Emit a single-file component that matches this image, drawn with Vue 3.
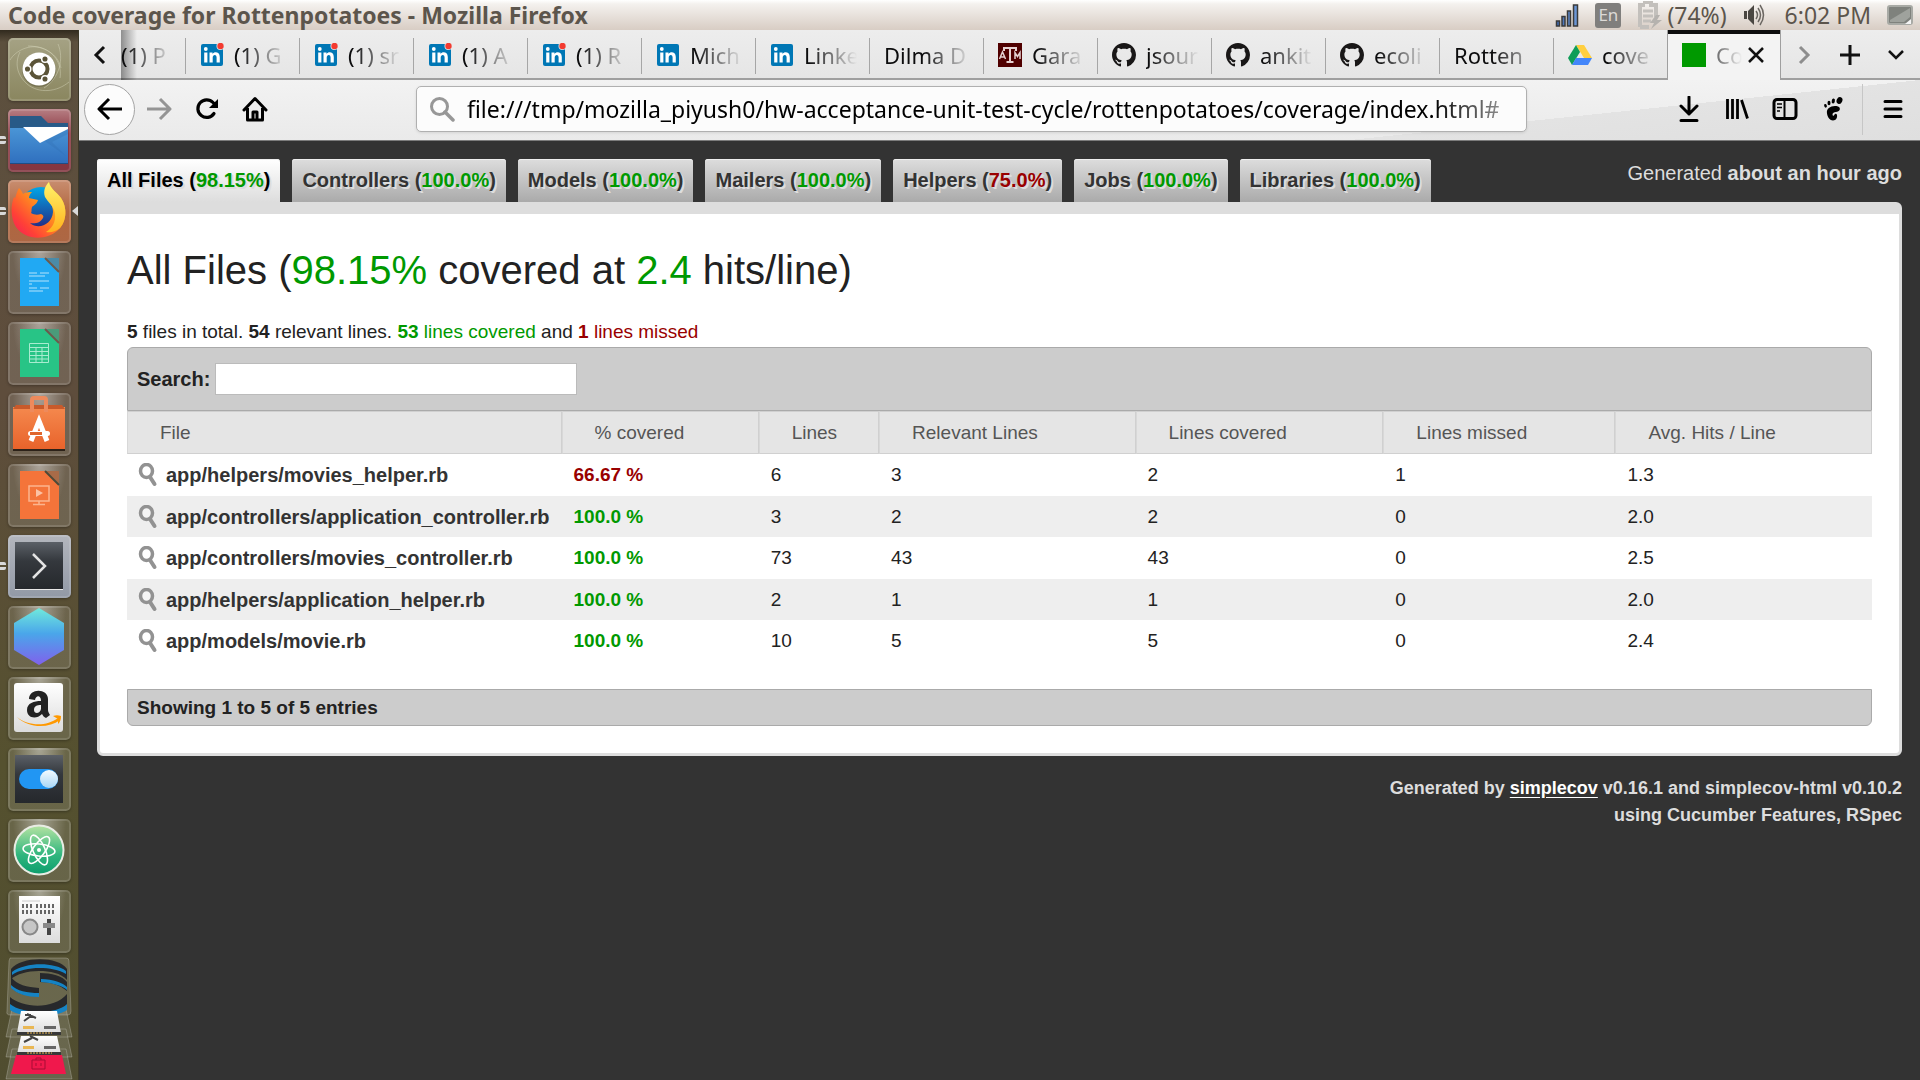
<script setup>
import { ref } from 'vue'

const query = ref('')
const address = ref('file:///tmp/mozilla_piyush0/hw-acceptance-unit-test-cycle/rottenpotatoes/coverage/index.html#')

const launcher = [
  { id: 'dash', name: 'Search your computer', tone: 'olive' },
  { id: 'files', name: 'Files', tone: 'wine', running: true },
  { id: 'firefox', name: 'Firefox', tone: 'rust', running: true, focused: true },
  { id: 'writer', name: 'Writer' },
  { id: 'calc', name: 'Calc' },
  { id: 'software', name: 'Software' },
  { id: 'impress', name: 'Impress' },
  { id: 'terminal', name: 'Terminal', tone: 'steel', running: true },
  { id: 'hexagon', name: 'Kitematic' },
  { id: 'amazon', name: 'Amazon' },
  { id: 'tweaks', name: 'Tweak Tool' },
  { id: 'atom', name: 'Atom' },
  { id: 'mixer', name: 'Mixer' }
]

const browserTabs = [
  { title: '(1) P', icon: '', first: true },
  { title: '(1) G', icon: 'linkedin-dot' },
  { title: '(1) sr', icon: 'linkedin-dot' },
  { title: '(1) A', icon: 'linkedin-dot' },
  { title: '(1) R', icon: 'linkedin-dot' },
  { title: 'Mich', icon: 'linkedin' },
  { title: 'Linke', icon: 'linkedin' },
  { title: 'Dilma D', icon: '' },
  { title: 'Gara', icon: 'tamu' },
  { title: 'jsour', icon: 'github' },
  { title: 'ankit', icon: 'github' },
  { title: 'ecoli', icon: 'github' },
  { title: 'Rotten', icon: '' },
  { title: 'cove', icon: 'drive' }
]

const groups = [
  { name: 'All Files', pct: '98.15%', level: 'green', active: true },
  { name: 'Controllers', pct: '100.0%', level: 'green' },
  { name: 'Models', pct: '100.0%', level: 'green' },
  { name: 'Mailers', pct: '100.0%', level: 'green' },
  { name: 'Helpers', pct: '75.0%', level: 'red' },
  { name: 'Jobs', pct: '100.0%', level: 'green' },
  { name: 'Libraries', pct: '100.0%', level: 'green' }
]

const columns = ['File', '% covered', 'Lines', 'Relevant Lines', 'Lines covered', 'Lines missed', 'Avg. Hits / Line']

const files = [
  { path: 'app/helpers/movies_helper.rb', pct: '66.67 %', level: 'red', nums: ['6', '3', '2', '1', '1.3'] },
  { path: 'app/controllers/application_controller.rb', pct: '100.0 %', level: 'green', nums: ['3', '2', '2', '0', '2.0'] },
  { path: 'app/controllers/movies_controller.rb', pct: '100.0 %', level: 'green', nums: ['73', '43', '43', '0', '2.5'] },
  { path: 'app/helpers/application_helper.rb', pct: '100.0 %', level: 'green', nums: ['2', '1', '1', '0', '2.0'] },
  { path: 'app/models/movie.rb', pct: '100.0 %', level: 'green', nums: ['10', '5', '5', '0', '2.4'] }
]
</script>

<template>
  <div class="desktop">
    <svg class="sprite" aria-hidden="true">
      <defs>
        <linearGradient id="g-folder" x1="0" y1="0" x2="0" y2="1"><stop offset="0" stop-color="#4a95d6" /><stop offset="1" stop-color="#2f6fbe" /></linearGradient>
        <linearGradient id="g-fox" x1="1" y1="0" x2="0" y2="1"><stop offset="0" stop-color="#ffd83a" /><stop offset=".4" stop-color="#ff9a1c" /><stop offset=".75" stop-color="#ff4236" /><stop offset="1" stop-color="#f4165e" /></linearGradient>
        <linearGradient id="g-tail" x1="0" y1="0" x2="0" y2="1"><stop offset="0" stop-color="#fff36a" /><stop offset="1" stop-color="#ffb21d" /></linearGradient>
        <linearGradient id="g-globe" x1="0" y1="0" x2="0" y2="1"><stop offset="0" stop-color="#00a6e8" /><stop offset="1" stop-color="#28207c" /></linearGradient>
        <linearGradient id="g-bag" x1="0" y1="0" x2="0" y2="1"><stop offset="0" stop-color="#f5894e" /><stop offset="1" stop-color="#e8622a" /></linearGradient>
        <linearGradient id="g-dark" x1="0" y1="0" x2="0" y2="1"><stop offset="0" stop-color="#5b6067" /><stop offset=".4" stop-color="#34383d" /><stop offset="1" stop-color="#25282c" /></linearGradient>
        <linearGradient id="g-hex" x1="0" y1="0" x2="0" y2="1"><stop offset="0" stop-color="#70eadc" /><stop offset=".45" stop-color="#4aa6ea" /><stop offset="1" stop-color="#8061ec" /></linearGradient>
        <linearGradient id="g-paper" x1="0" y1="0" x2="0" y2="1"><stop offset="0" stop-color="#ffffff" /><stop offset="1" stop-color="#dcdcdc" /></linearGradient>
        <linearGradient id="g-atom" x1="0" y1="0" x2="0" y2="1"><stop offset="0" stop-color="#b5e3a2" /><stop offset=".6" stop-color="#30b67e" /><stop offset="1" stop-color="#0c9d6c" /></linearGradient>
        <linearGradient id="g-knob" x1="0" y1="0" x2="0" y2="1"><stop offset="0" stop-color="#f4fbff" /><stop offset="1" stop-color="#a8d6f5" /></linearGradient>
        <linearGradient id="g-bars" x1="0" y1="0" x2="1" y2="0"><stop offset="0" stop-color="#3f68b0" /><stop offset="1" stop-color="#6f9ad8" /></linearGradient>
      </defs>

      <symbol id="dash" viewBox="0 0 63 63">
        <g fill="none" stroke="#d8d6bc" stroke-opacity=".45" stroke-width="1">
          <path d="M2 22C8 12 22 6 34 10c14 5 20 18 18 30M50 6c6 14 2 34-14 44M61 44c-12 10-30 12-42 2C8 36 7 24 12 14M20 8c16 0 30 8 33 22" />
        </g>
        <circle cx="31" cy="32" r="17" fill="#37351f" opacity=".3" /><circle cx="31" cy="31" r="16.500" fill="#fff" />
        <circle cx="31" cy="31" r="8.500" fill="none" stroke="#5b5438" stroke-width="4" />
        <g fill="#5b5438" stroke="#fff" stroke-width="1.500"><circle cx="19.500" cy="31" r="3.300" /><circle cx="37" cy="21" r="3.300" /><circle cx="37" cy="41" r="3.300" /></g>
      </symbol>

      <symbol id="files" viewBox="0 0 63 63">
        <path d="M2 7h31l7 7h20v12H2z" fill="#285a87" />
        <path d="M2 19h58v36H2z" fill="url(#g-folder)" />
        <path d="M15 17h45v8L44 33l14 14z" fill="#2a68ad" opacity=".25" />
        <path d="M15 18h45v2L32 34z" fill="#fff" />
        <path d="M2 54h58v1H2z" fill="#1e4d86" />
      </symbol>

      <symbol id="firefox" viewBox="0 0 63 63">
        <circle cx="33" cy="29" r="22" fill="url(#g-globe)" />
        <path d="M11 8c2 2 3 4 4 6 3-2 6-2 9-2-2 2-3 4-3 6l9 2c-1 4-4 5-6 7-1 3 0 5-1 6 3 2 7 2 10 1 2 1 3 2 2 4-3 5-8 6-13 5 8 7 22 2 23-11 0-6-3-11-6-15-2-6-1-11 2-15 1 7 8 10 12 16 7 10 6 25-4 33-12 10-32 9-41-4C2 37 3 24 6 17c1 1 1 1 1 2 1-4 2-8 4-11z" fill="url(#g-fox)" />
        <path d="M41 2c1 7 8 10 12 16 6 9 6 22-1 30-5 4-10 5-14 4 8-5 11-13 8-22-2-5-6-8-9-13-2-6 0-11 4-15z" fill="url(#g-tail)" />
      </symbol>

      <symbol id="writer" viewBox="0 0 63 63">
        <path d="M12 7h25l14 14v34H12z" fill="#21a9f3" /><path d="M37 7h14v14z" fill="#4a8ba8" /><path d="M37 7l14 14" stroke="#6c5a4c" stroke-width="2" />
        <path d="M21 22h8m3 0h9M21 25h16M21 30h20M21 33h3M21 37h8m3 0h9M21 40h14" stroke="#b6e3fb" stroke-width="1" />
      </symbol>
      <symbol id="calc" viewBox="0 0 63 63">
        <path d="M12 7h25l14 14v34H12z" fill="#28c486" /><path d="M37 7h14v14z" fill="#4a9b7a" /><path d="M37 7l14 14" stroke="#6c5a4c" stroke-width="2" />
        <path d="M21.500 21.500h19v19h-19zM21.500 25.500h19M21.500 29.500h19M21.500 33.500h19M21.500 37h19M28 25.500v15M34 25.500v15" fill="none" stroke="#a8ecd0" />
      </symbol>
      <symbol id="software" viewBox="0 0 63 63">
        <path d="M5 14h52v43H5z" fill="url(#g-bag)" /><path d="M5 56h52v2H5z" fill="#2c2219" />
        <path d="M5 16l3-4h46l3 4z" fill="#c85a2b" />
        <path d="M24 19V7q0-2 2-2h10q2 0 2 2v12" fill="none" stroke="#ee8a5c" stroke-width="4" />
        <path d="M23 48l8-20 8 20" fill="none" stroke="#fff" stroke-width="5" />
        <rect x="20" y="38" width="22" height="5" rx="2.500" fill="#fff" /><path d="M22 39h12v3H22z" fill="#e0662d" />
      </symbol>
      <symbol id="impress" viewBox="0 0 63 63">
        <path d="M12 7h25l14 14v34H12z" fill="#f4743a" /><path d="M37 7h14v14z" fill="#a86b48" /><path d="M37 7l14 14" stroke="#4c4a38" stroke-width="2" />
        <path d="M21 22h20v15H21zM31 37v3M25 40.500h12" fill="none" stroke="#fbb48e" stroke-width="1.500" /><path d="M28 25l7 4-7 4z" fill="#fbc2a4" />
      </symbol>
      <symbol id="terminal" viewBox="0 0 63 63">
        <path d="M7 7h48v48H7z" fill="url(#g-dark)" /><path d="M7 54h48v1H7z" fill="#e8e8e8" />
        <path d="M25 19l12 12-12 12" fill="none" stroke="#e4e4e4" stroke-width="2.500" />
      </symbol>
      <symbol id="hexagon" viewBox="0 0 63 63"><path d="M31 2l25 15v27L31 59 6 44V17z" fill="url(#g-hex)" /></symbol>
      <symbol id="amazon" viewBox="0 0 63 63">
        <rect x="6" y="6" width="49" height="49" rx="3" fill="url(#g-paper)" />
        <path d="M21 22c0-11 19-11 19 0v11c0 2 1 3 2 5l-4 3c-2-1-3-2-4-4-6 6-15 4-15-4 0-7 7-9 14-9 0-6-5-6-6-1zM33 28c-4 0-7 1-7 5s6 4 7-1z" fill="#222" fill-rule="evenodd" />
        <path d="M9 40c11 9 29 10 41 1l2 2C40 52 20 51 9 40zM45 39c3-1 5-1 8 0 0 4-1 6-3 8l0-5z" fill="#f90" />
      </symbol>
      <symbol id="tweaks" viewBox="0 0 63 63">
        <path d="M7 7h48v48H7z" fill="url(#g-dark)" /><rect x="11" y="21" width="39" height="20" rx="10" fill="#2196f3" /><circle cx="41" cy="31" r="9" fill="url(#g-knob)" />
      </symbol>
      <symbol id="atom" viewBox="0 0 63 63">
        <circle cx="31" cy="31" r="24.500" fill="url(#g-atom)" stroke="#e9ece4" stroke-width="2" />
        <g fill="none" stroke="#fff" stroke-width="1.600"><ellipse cx="31" cy="31" rx="16" ry="6" transform="rotate(6 31 31)" /><ellipse cx="31" cy="31" rx="16" ry="6" transform="rotate(66 31 31)" /><ellipse cx="31" cy="31" rx="16" ry="6" transform="rotate(-54 31 31)" /></g>
        <circle cx="31" cy="31" r="2" fill="#fff" />
      </symbol>
      <symbol id="mixer" viewBox="0 0 63 63">
        <path d="M11 6h41v47H11z" fill="url(#g-paper)" />
        <path d="M14 11h18" stroke="#ccc" /><path d="M14 16h10M28 16h20M14 22h10M28 22h20" stroke="#666" stroke-width="4" stroke-dasharray="2 2" />
        <circle cx="22" cy="37" r="7.500" fill="#c6c6c6" stroke="#888" stroke-width="2" /><path d="M39 29h4v16h-4z" fill="#444" /><path d="M35 33h12v5H35z" fill="#888" />
      </symbol>

      <symbol id="linkedin" viewBox="0 0 24 24">
        <rect x="1" y="1" width="22" height="22" rx="2" fill="#0077b5" />
        <g fill="#fff"><circle cx="5.800" cy="6" r="1.900" /><path d="M4.200 9.500h3.200v10H4.200zM9.500 9.500h3v1.400c1.600-2.600 7.300-2.400 7.300 3v5.600h-3.200v-5c0-3.400-3.900-3.200-3.900 0v5H9.500z" /></g>
      </symbol>
      <symbol id="linkedin-dot" viewBox="0 0 24 24"><use href="#linkedin" /><circle cx="20.500" cy="3" r="4" fill="#e8e8e8" /><circle cx="20.500" cy="3" r="3.200" fill="#f33b30" /></symbol>
      <symbol id="tamu" viewBox="0 0 24 24">
        <path d="M0 0h24v24H0z" fill="#500000" />
        <g fill="none" stroke="#e6d2d2" stroke-width="2"><path d="M6 8V5h12v3M12 5v14M8.500 19h7" /><path d="M1.500 16l3-7 3 7M3 14h3M17 16V9.500l2.500 4 2.500-4V16" stroke-width="1.500" /></g>
      </symbol>
      <symbol id="github" viewBox="0 0 16 16">
        <path fill="#191717" d="M8 0C3.580 0 0 3.580 0 8c0 3.540 2.290 6.530 5.470 7.590.4.070.55-.17.55-.38 0-.19-.01-.82-.01-1.490-2.010.37-2.530-.49-2.690-.94-.09-.23-.48-.94-.82-1.130-.28-.15-.68-.52-.01-.53.63-.01 1.080.58 1.230.82.72 1.210 1.870.87 2.330.66.07-.52.28-.87.51-1.070-1.780-.2-3.640-.89-3.640-3.950 0-.87.31-1.590.82-2.150-.08-.2-.36-1.020.08-2.120 0 0 .67-.21 2.200.82.64-.18 1.320-.27 2-.27s1.360.09 2 .27c1.530-1.040 2.200-.82 2.200-.82.44 1.100.16 1.920.08 2.120.51.56.82 1.270.82 2.150 0 3.070-1.870 3.750-3.650 3.950.29.25.54.73.54 1.480 0 1.070-.01 1.930-.01 2.200 0 .21.15.46.55.38A8.010 8.010 0 0 0 16 8c0-4.420-3.580-8-8-8z" />
      </symbol>
      <symbol id="drive" viewBox="0 0 24 24"><path d="M8 2h8l8 13h-8z" fill="#ffcf40" /><path d="M8 2l4 7L4 22 0 15z" fill="#0f9d58" /><path d="M8 15h16l-4 7H4z" fill="#4386fa" /></symbol>
      <symbol id="coverage" viewBox="0 0 24 24"><path d="M0 0h24v24H0z" fill="#090" /></symbol>

      <symbol id="lens" viewBox="0 0 20 24">
        <ellipse cx="8.500" cy="8" rx="6" ry="6.500" fill="#fff" fill-opacity=".4" stroke="#929292" stroke-width="3.500" /><path d="M12 14l4.500 7" stroke="#929292" stroke-width="4" stroke-linecap="round" />
      </symbol>
    </svg>

    <header class="menubar">
      <strong class="window-title">Code coverage for Rottenpotatoes - Mozilla Firefox</strong>
      <div class="indicators">
        <svg class="signal" width="24" height="24" viewBox="0 0 24 24" fill="url(#g-bars)" stroke="#3a3a3a" stroke-width="1.500"><path d="M1.500 18h3v5h-3zM7 13.500h3V23H7zM12.500 8h3v15h-3zM18.500 2h4v21h-4z" /></svg>
        <span class="keyboard">En</span>
        <svg class="battery" width="26" height="28" viewBox="0 0 26 28"><path d="M6 1h8v3h5v12M3 26V4h5M3 26h9" fill="none" stroke="#c3c0bc" stroke-width="4" /><path d="M6 10h10M6 15h10M6 20h8" stroke="#c3c0bc" stroke-width="3" /><path d="M19 14l-6 8h4l-3 6 11-9h-5l3-5z" fill="#b5b2ae" /></svg>
        <span class="charge">(74%)</span>
        <svg class="speaker" width="22" height="22" viewBox="0 0 22 22"><path d="M1 7h3v8H1zM5 7l6-6v20l-6-6z" fill="#4a4742" /><path d="M13 7q3 4 0 8M15 4q5 7 0 14M17 1q7 10 0 20" fill="none" stroke="#6b6762" stroke-width="1.500" /></svg>
        <time class="clock">6:02 PM</time>
        <svg class="session" width="26" height="21" viewBox="0 0 26 21"><rect x="1" y="1" width="24" height="18" rx="2" fill="#7f827d" stroke="#a8aaa5" stroke-width="2" /><path d="M3 15L23 3v9l-6 5H3z" fill="#9fa29d" /><path d="M18 19l6-5v5z" fill="#f4f4f4" /></svg>
      </div>
    </header>

    <div class="workspace">
      <nav class="launcher" aria-label="Launcher">
        <button v-for="app in launcher" :key="app.id" class="tile" :class="[app.tone, { running: app.running, focused: app.focused }]" :aria-label="app.name">
          <svg width="63" height="63"><use :href="'#' + app.id" /></svg>
        </button>
        <svg class="folded" width="79" height="124" viewBox="0 0 79 124" aria-hidden="true">
          <g fill="#fff" fill-opacity=".14" stroke="#fff" stroke-opacity=".22"><path d="M10 1h56q3 0 3 3l2 50q0 4-3 4H10q-4 0-3-4l2-50z" /><path d="M12 52h54l6 28H6zM12 72h54l6 28H6zM12 92h54l6 30H6z" /></g>
          <path d="M11 12c10-13 48-13 56 0v11c-6-7-17-9-28-9-12 0-22 3-28 8zM11 20c6 8 16 10 28 11v8c-12 0-23-2-28-9zM67 25c-4-6-16-9-27-9v9c10 0 20 3 27 9zM10 40c12 11 44 13 57-3v11c-12 10-46 12-57 2z" fill="#27282b" />
          <path d="M12 15c14-10 42-10 54-1v3c-14-8-41-8-54 1zM11 31c6 6 16 9 28 9v-4c-12 0-22-2-28-8zM67 33c-4-4-14-7-26-8v-3c12 0 22 4 26 8zM10 47c12 10 46 11 57 0v6c-12 8-46 8-57 0z" fill="#1583c4" />
          <path d="M21 54h36l4 22H17z" fill="url(#g-paper)" /><path d="M17 75h44v3H17z" fill="#383838" /><path d="M27 76h25" stroke="#e9b754" stroke-dasharray="2 1" /><path d="M23 69h11v3H23z" fill="#e9b754" /><path d="M44 69h12v3H44z" fill="#666" /><path d="M24 64l7-5M27 57l9 4M25 58h6" stroke="#444" stroke-width="2" />
          <path d="M21 79h36l4 18H17z" fill="url(#g-paper)" /><path d="M17 95h44v3H17z" fill="#383838" /><path d="M27 96h25" stroke="#e9b754" stroke-dasharray="2 1" /><path d="M23 89h11v3H23z" fill="#e9b754" /><path d="M44 89h12v3H44z" fill="#666" /><path d="M24 85l8-4M30 79l8 4" stroke="#444" stroke-width="2" />
          <path d="M16 98h46l4 19H11z" fill="#f0184c" /><path d="M32 103h13v9H32zM36 103v-2h5v2M36 106v3M41 106v3" fill="none" stroke="#a50d35" />
        </svg>
      </nav>

      <div class="browser">
        <div class="tabstrip" role="tablist" aria-label="Browser tabs">
          <button class="scroll left" aria-label="Scroll left"><svg width="14" height="20" viewBox="0 0 14 20"><path d="M11 2L3 10l8 8" fill="none" stroke="#111" stroke-width="3" /></svg></button>
          <button v-for="tab in browserTabs" :key="tab.title + tab.icon" class="tab" :class="{ first: tab.first }" role="tab">
            <svg v-if="tab.icon" width="24" height="24"><use :href="'#' + tab.icon" /></svg>
            <span class="label">{{ tab.title }}</span>
          </button>
          <button class="tab active" role="tab" aria-selected="true">
            <svg width="24" height="24"><use href="#coverage" /></svg>
            <span class="label">Co</span>
            <svg class="close" width="16" height="16" viewBox="0 0 16 16"><path d="M1 1l14 14M15 1L1 15" stroke="#111" stroke-width="2.500" /></svg>
          </button>
          <div class="strip-tools">
            <button aria-label="Scroll right"><svg width="14" height="20" viewBox="0 0 14 20"><path d="M3 2l8 8-8 8" fill="none" stroke="#8d8d8d" stroke-width="3" /></svg></button>
            <button aria-label="New tab"><svg width="22" height="22" viewBox="0 0 22 22"><path d="M11 1v20M1 11h20" stroke="#111" stroke-width="3" /></svg></button>
            <button aria-label="List tabs"><svg width="16" height="12" viewBox="0 0 16 12"><path d="M1 2l7 7 7-7" fill="none" stroke="#111" stroke-width="2.500" /></svg></button>
          </div>
        </div>

        <div class="toolbar">
          <button class="back" aria-label="Back"><svg width="26" height="24" viewBox="0 0 26 24"><path d="M25 12H3M12 2L2 12l10 10" fill="none" stroke="#000" stroke-width="3" stroke-linejoin="round" /></svg></button>
          <button class="tool" aria-label="Forward"><svg width="26" height="24" viewBox="0 0 26 24"><path d="M1 12h22M14 2l10 10-10 10" fill="none" stroke="#949494" stroke-width="3" stroke-linejoin="round" /></svg></button>
          <button class="tool" aria-label="Reload"><svg width="24" height="24" viewBox="0 0 24 24"><path d="M19 16.500A8.800 8.800 0 1 1 18 5.500l3 3" fill="none" stroke="#000" stroke-width="3.200" stroke-linecap="round" /><path d="M23 2v9h-9z" fill="#000" /></svg></button>
          <button class="tool" aria-label="Home"><svg width="26" height="26" viewBox="0 0 26 26"><path d="M2 14L13 2.500 24 14M5.500 12v12h15V12M11 24v-8h4v8" fill="none" stroke="#000" stroke-width="3" stroke-linejoin="round" stroke-linecap="round" /></svg></button>
          <div class="address">
            <svg width="26" height="26" viewBox="0 0 26 26"><circle cx="10.500" cy="10.500" r="8" fill="none" stroke="#979797" stroke-width="3" /><path d="M16 16l8 8" stroke="#979797" stroke-width="3.500" stroke-linecap="round" /></svg>
            <input v-model="address" type="text" aria-label="Address" spellcheck="false" />
          </div>
          <div class="tools">
            <button class="tool" aria-label="Downloads"><svg width="20" height="26" viewBox="0 0 20 26"><path d="M10 1v17M2 10l8 8 8-8M2 24.500h16" fill="none" stroke="#000" stroke-width="3" stroke-linejoin="round" stroke-linecap="round" /></svg></button>
            <button class="tool" aria-label="Library"><svg width="24" height="24" viewBox="0 0 24 24"><path d="M2.500 2v20M7.500 2v20M12.500 2v20M16.500 3l6 18.500" stroke="#000" stroke-width="2.800" /></svg></button>
            <button class="tool" aria-label="Sidebars"><svg width="26" height="24" viewBox="0 0 26 24"><rect x="2" y="2.500" width="22" height="19" rx="3" fill="none" stroke="#000" stroke-width="3" /><path d="M12.500 3v18" stroke="#000" stroke-width="2" /><path d="M5 7h5M5 10.500h5M5 14h3" stroke="#000" stroke-width="1.300" /></svg></button>
            <button class="tool" aria-label="Extension"><svg width="22" height="24" viewBox="0 0 22 24"><ellipse cx="17.500" cy="3.500" rx="2.800" ry="3.500" transform="rotate(25 17.500 3.500)" /><ellipse cx="11.300" cy="4" rx="1.600" ry="2.600" transform="rotate(10 11.300 4)" /><ellipse cx="7" cy="6" rx="1.500" ry="2.200" /><ellipse cx="3.500" cy="8.800" rx="1.300" ry="1.900" transform="rotate(-20 3.500 8.800)" /><path d="M16 9.500c-6-1.500-12 1.500-11 7 .6 4 3 7 6 7 3.200 0 4.500-3 4-5.500-.4-1.500-2-1.500-2.600-.2-.5 1.400-1.900 1-1.900-.4 0-3.500 6.500-1.500 7.300-5 .3-1.300-.5-2.500-1.800-2.900z" /></svg></button>
            <span class="divider"></span>
            <button class="tool menu" aria-label="Menu"><svg width="20" height="20" viewBox="0 0 20 20"><path d="M2 2.500h16M2 10h16M2 17.500h16" stroke="#000" stroke-width="3" stroke-linecap="round" /></svg></button>
          </div>
        </div>

        <main class="page">
          <div class="top">
            <nav class="groups" aria-label="File groups">
              <a v-for="g in groups" :key="g.name" href="#" :class="{ active: g.active }">{{ g.name }} (<span :class="g.level">{{ g.pct }}</span>)</a>
            </nav>
            <p class="timestamp">Generated <b>about an hour ago</b></p>
          </div>

          <section class="panel">
            <h2>All Files (<span class="green">98.15%</span> covered at <span class="green">2.4</span> hits/line)</h2>
            <p class="summary"><b>5</b> files in total. <b>54</b> relevant lines. <span class="green"><b>53</b> lines covered</span> and <span class="red"><b>1</b> lines missed</span></p>
            <div class="filter">
              <label for="search">Search:</label>
              <input id="search" v-model="query" type="text" />
            </div>
            <table>
              <colgroup><col class="c-file" /><col class="c-pct" /><col class="c-lines" /><col class="c-rel" /><col class="c-cov" /><col class="c-miss" /><col class="c-hits" /></colgroup>
              <thead><tr><th v-for="c in columns" :key="c" scope="col">{{ c }}</th></tr></thead>
              <tbody>
                <tr v-for="f in files" :key="f.path">
                  <td><a href="#"><svg width="20" height="24"><use href="#lens" /></svg>{{ f.path }}</a></td>
                  <td :class="f.level"><b>{{ f.pct }}</b></td>
                  <td v-for="(n, i) in f.nums" :key="i">{{ n }}</td>
                </tr>
              </tbody>
            </table>
            <div class="entries">Showing 1 to 5 of 5 entries</div>
          </section>

          <footer>Generated by <a href="#">simplecov</a> v0.16.1 and simplecov-html v0.10.2<br />using Cucumber Features, RSpec</footer>
        </main>
      </div>
    </div>
  </div>
</template>

<style>
body { margin: 0; background: #333; }
</style>

<style scoped>
* { box-sizing: border-box; }
button { padding: 0; border: 0; background: none; color: inherit; font: inherit; display: flex; align-items: center; justify-content: center; flex: none; }
svg { display: block; flex: none; }
.sprite { position: absolute; width: 0; height: 0; }
.desktop { min-height: 100vh; display: flex; flex-direction: column; overflow: hidden; font-family: "Noto Sans", sans-serif; }

.menubar { height: 30px; display: flex; align-items: center; justify-content: space-between; padding: 0 7px 0 8px; background: linear-gradient(#fff 0, #f4f1ee 4px, #d8cdc4 100%); color: #5c554c; font-size: 23px; line-height: 30px; white-space: nowrap; }
.indicators { display: flex; align-items: center; }
.keyboard { width: 26px; height: 25px; margin-left: 16px; border-radius: 3px; background: #807f7d; color: #dcdad7; font-size: 17px; line-height: 24px; text-align: center; }
.battery { margin-left: 16px; }
.charge { margin-left: 4px; }
.speaker { margin-left: 16px; }
.clock { margin-left: 20px; }
.session { margin-left: 16px; }

.workspace { flex: 1; display: flex; }
.launcher { flex: none; width: 79px; padding-top: 8px; display: flex; flex-direction: column; align-items: center; gap: 8px; background: linear-gradient(rgba(20, 16, 8, .6), transparent 12px), linear-gradient(#5c503e, #5e4d3c 35%, #55512f 70%, #504d30); border-right: 1px solid #3c3828; }
.tile { position: relative; width: 63px; height: 63px; border-radius: 5px; background: radial-gradient(ellipse at 50% 0, rgba(255, 255, 255, .42), transparent 60%), rgba(255, 255, 255, .12); box-shadow: inset 0 0 0 2px rgba(255, 255, 255, .13), 0 1px 3px rgba(0, 0, 0, .3); }
.tile.olive { background: linear-gradient(#a5a284, #8a865f); }
.tile.wine { background: linear-gradient(#b77f84, #8a3640 40%, #843641); }
.tile.rust { background: linear-gradient(#c98e70, #b0663f 50%, #ad6744); }
.tile.steel { background: linear-gradient(#b3b6bd, #9299a6); }
.tile.running::before { content: ""; position: absolute; left: -8px; top: 27px; width: 6px; height: 8px; background: linear-gradient(#d9d9d9 3px, transparent 3px, transparent 5px, #d9d9d9 5px); border-radius: 0 2px 2px 0; }
.tile.focused::after { content: ""; position: absolute; right: -7px; top: 26px; border: 5px solid transparent; border-right: 6px solid #d9d9d9; border-left: 0; }
.folded { margin-top: -4px; }

.browser { flex: 1; min-width: 0; display: flex; flex-direction: column; }
.tabstrip { height: 50px; display: flex; align-items: stretch; background: linear-gradient(#ededed, #e5e5e5); box-shadow: inset 0 -2px #9f9f9f; font-size: 22px; color: #0c0c0d; }
.scroll { width: 42px; }
.tab { position: relative; width: 114px; justify-content: flex-start; gap: 10px; padding: 0 12px 0 15px; }
.tab::before { content: ""; position: absolute; left: 0; top: 8px; height: 36px; border-left: 1px solid #a6a6a6; }
.tab .label { flex: 1; min-width: 0; overflow: hidden; white-space: nowrap; text-align: left; -webkit-mask-image: linear-gradient(to right, #000 calc(100% - 48px), transparent); mask-image: linear-gradient(to right, #000 calc(100% - 48px), transparent); }
.tab.first { width: 64px; padding: 0 12px 0 0; background: linear-gradient(to right, rgba(0, 0, 0, .4), transparent 16px); }
.tab.first::before { display: none; }
.tab.active { padding: 0 16px 0 14px; background: #f3f3f3; border: solid #9f9f9f; border-width: 0 1px; box-shadow: inset 0 4px #0c0c0d; }
.tab.active::before { display: none; }
.tab.active .close { margin-left: -4px; }
.tab.active .label { -webkit-mask-image: linear-gradient(to right, rgba(0, 0, 0, .6), transparent); mask-image: linear-gradient(to right, rgba(0, 0, 0, .6), transparent); }
.strip-tools { flex: 1; display: flex; align-items: center; justify-content: space-between; padding: 0 16px; }

.toolbar { height: 61px; display: flex; align-items: center; padding: 0 17px 2px 5px; border-bottom: 1px solid #7c7c7c; background: linear-gradient(to top left, #dfdfdf, #e3e3e3 50%, transparent 50%) right bottom / 570px 100% no-repeat, linear-gradient(#f2f2f2, #eaeaea); }
.back { width: 51px; height: 51px; border: 1px solid #a4a4a4; border-radius: 50%; background: #fcfcfc; }
.tool { width: 48px; height: 48px; }
.address { width: 1111px; flex: 0 1 auto; height: 46px; margin-left: 137px; display: flex; align-items: center; gap: 12px; padding: 0 3px 0 12px; border: 1px solid #b0b0b0; border-radius: 5px; background: #fcfcfc; box-shadow: 0 1px 3px rgba(0, 0, 0, .1); }
.address input { flex: 1; min-width: 0; height: 40px; padding: 0; border: 0; outline: 0; background: none; font: 23px "Noto Sans", sans-serif; color: #000; -webkit-mask-image: linear-gradient(to right, #000 calc(100% - 90px), rgba(0, 0, 0, .25)); mask-image: linear-gradient(to right, #000 calc(100% - 90px), rgba(0, 0, 0, .25)); }
.tools { margin-left: auto; display: flex; align-items: center; }
.divider { height: 51px; margin-left: 5px; border-left: 1px solid #c6c6c6; }
.menu { width: 20px; margin-left: 20px; }

.page { flex: 1; padding: 18px 18px 40px; background: #333; color: #222; font-family: "Liberation Sans", sans-serif; font-size: 19px; line-height: 26px; }
.page p, .page h2 { margin: 0; }
.green { color: #090; }
.red { color: #900; }
.top { display: flex; justify-content: space-between; font-size: 20px; }
.groups { display: flex; gap: 12px; }
.groups a { height: 43px; padding: 0 10px; border-radius: 3px 3px 0 0; background: linear-gradient(#ddd, #aaa); box-shadow: inset 0 1px #eee; color: #333; font-weight: bold; line-height: 42px; text-decoration: none; text-shadow: 1px 1px #ddd, 2px 2px #ddd; white-space: nowrap; }
.groups a.active { background: linear-gradient(#fff, #ddd); color: #000; }
.timestamp { padding-top: 1px; color: #ddd; white-space: nowrap; }
.panel { padding: 27px; border: 3px solid #ddd; border-top-width: 12px; border-radius: 0 6px 6px 6px; background: #fff; }
.panel h2 { height: 58px; font-size: 40px; line-height: 58px; font-weight: normal; }
.summary { padding-top: 20px; height: 48px; }
.filter { height: 64px; display: flex; align-items: center; gap: 5px; padding: 0 9px; border: 1px solid #aaa; border-radius: 6px 6px 0 0; background: #ccc; font-size: 20px; font-weight: bold; }
.filter input { width: 362px; height: 32px; padding: 0 6px; border: 1px solid #bbb; background: #fff; font: inherit; font-weight: normal; }
table { width: 100%; table-layout: fixed; border-collapse: separate; border-spacing: 0; }
.c-file { width: 24.9%; }
.c-pct { width: 11.3%; }
.c-lines { width: 6.9%; }
.c-rel { width: 14.7%; }
.c-cov { width: 14.2%; }
.c-miss { width: 13.3%; }
.c-hits { width: 14.7%; }
th { height: 43px; padding: 0 10px 0 32px; border: 1px solid #d0d0d0; border-left-color: #d8d8d8; background: #e5e5e5; color: #555; font-weight: normal; text-align: left; }
td { height: 42px; padding: 0 12px; white-space: nowrap; }
tr:nth-child(even) td { height: 41px; background: #eee; }
td a { display: flex; align-items: center; gap: 8px; margin-left: -1px; color: #333; font-size: 20px; font-weight: bold; text-decoration: none; }
.entries { height: 37px; margin-top: 27px; padding: 0 9px; border: 1px solid #aaa; border-radius: 0 0 6px 6px; background: #ccc; font-weight: bold; line-height: 35px; }
footer { padding-top: 19px; color: #ddd; font-size: 18px; font-weight: bold; line-height: 27px; text-align: right; }
footer a { color: #fff; text-underline-offset: 3px; }
</style>
